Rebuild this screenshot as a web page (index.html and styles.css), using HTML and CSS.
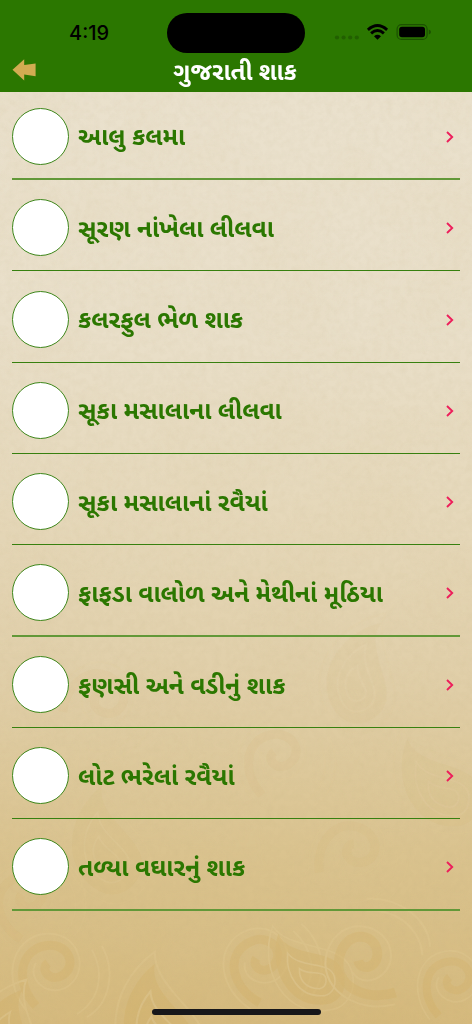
FILE: index.html
```html
<!DOCTYPE html>
<html lang="gu">
<head>
<meta charset="utf-8">
<title>ગુજરાતી શાક</title>
<link rel="stylesheet" href="styles.css">
</head>
<body>
<div class="screen">
  <svg class="paper" viewBox="0 0 472 1024" aria-hidden="true">
    <defs>
      <filter id="grain" x="0" y="0" width="100%" height="100%">
        <feTurbulence type="fractalNoise" baseFrequency="0.15" numOctaves="3" seed="4"/>
        <feColorMatrix values="0 0 0 0 .5  0 0 0 0 .4  0 0 0 0 .2  .5 .5 0 0 -.4"/>
      </filter>
      <filter id="mottle" x="0" y="0" width="100%" height="100%">
        <feTurbulence type="fractalNoise" baseFrequency="0.012" numOctaves="3" seed="9"/>
        <feColorMatrix values="0 0 0 0 .7  0 0 0 0 .56  0 0 0 0 .32  .8 .4 0 0 -.5"/>
      </filter>
      <g id="paisley">
        <path class="leaf" d="M0 60C-42 42-38-14-2-42C-8-8 48 10 34 42C27 59 12 64 0 60Z"/>
        <path class="vein" d="M0 68C-52 48-48-20-2-53C-3-14 60 8 42 48C33 68 13 74 0 68ZM1 49C-26 34-22 2-6-17C-5 8 31 18 23 38C18 49 9 52 1 49ZM1 39C-14 28-12 15-5 6C-2 19 18 23 14 33C11 40 5 41 1 39Z"/>
      </g>
      <g id="curl">
        <path class="swirl" d="M-18 40C-38 18-36-14-10-20C14-25 24-1 9 9C-3 17-15 4-6-3"/>
        <path class="vein" d="M-28 44C-52 14-43-27-11-32C26-37 38 8 11 22C-7 31-28 12-18-3M23 48C46 34 51 7 38-16M33 51C56 38 62 5 48-20"/>
      </g>
    </defs>
    <g class="pattern faint">
      <use href="#paisley" transform="translate(365 662) rotate(25)"/>
      <use href="#curl" transform="translate(280 755)"/>
      <use href="#curl" transform="translate(105 700) rotate(50)"/>
      <use href="#paisley" transform="translate(430 774) rotate(-30)"/>
      <use href="#paisley" transform="translate(104 830) scale(1.05)"/>
      <use href="#curl" transform="translate(28 896) rotate(-15)"/>
      <use href="#curl" transform="translate(357 850) rotate(35)"/>
    </g>
    <g class="pattern">
      <use href="#curl" transform="translate(54 966)"/>
      <use href="#paisley" transform="translate(157 1010) scale(1.1)"/>
      <use href="#curl" transform="translate(263 959) rotate(-20)"/>
      <use href="#paisley" transform="translate(300 962) rotate(-35) scale(.85)"/>
      <use href="#curl" transform="translate(364 956) rotate(-65) scale(1.1)"/>
      <use href="#curl" transform="translate(455 980) scale(.9)"/>
      <use href="#paisley" transform="translate(10 1030) rotate(20)"/>
    </g>
    <rect width="472" height="1024" filter="url(#mottle)" opacity=".22"/>
    <rect width="472" height="1024" filter="url(#grain)" opacity=".2"/>
  </svg>
  <header class="header">
    <div class="status">
      <span class="time">4:19</span>
      <span class="island"></span>
      <svg class="signals" viewBox="0 0 100 24">
        <g fill="#225f00"><circle cx="3" cy="17.5" r="2.1"/><circle cx="9.6" cy="17.5" r="2.1"/><circle cx="16.2" cy="17.5" r="2.1"/><circle cx="22.8" cy="17.5" r="2.1"/></g>
        <g fill="none" stroke="#000" stroke-width="2.9"><path d="M33.9 9.8Q43.5 1.4 53.1 9.8M37.1 13.4Q43.5 7.7 49.9 13.4"/></g>
        <path d="M40 16.2Q43.5 13.4 47 16.2L43.5 19.7Z"/>
        <rect x="63.1" y="4.6" width="30" height="14.8" rx="4.5" fill="none" stroke="#1c5100" stroke-width="1.2"/>
        <rect x="65.2" y="6.7" width="25.8" height="10.6" rx="2.8"/>
        <path d="M94.8 9.6Q97 10.2 97 12T94.8 14.4Z" fill="#1c5100"/>
      </svg>
    </div>
    <div class="titlebar">
      <svg class="back" viewBox="0 0 24 22"><path d="M.5 10.8L12.2.2V6.1L23.6 4.5V17.2L12.2 15.5V21.5Z" fill="#d2ac52"/></svg>
      <h1 class="title">ગુજરાતી શાક</h1>
    </div>
  </header>
  <ul class="list">
    <li class="row soft"><span class="thumb"></span><span class="name">આલુ કલમા</span><svg class="chevron" viewBox="0 0 8 12"><path d="M1 1L6.2 6L1 11"/></svg></li>
    <li class="row"><span class="thumb"></span><span class="name">સૂરણ નાંખેલા લીલવા</span><svg class="chevron" viewBox="0 0 8 12"><path d="M1 1L6.2 6L1 11"/></svg></li>
    <li class="row"><span class="thumb"></span><span class="name">કલરફુલ ભેળ શાક</span><svg class="chevron" viewBox="0 0 8 12"><path d="M1 1L6.2 6L1 11"/></svg></li>
    <li class="row"><span class="thumb"></span><span class="name">સૂકા મસાલાના લીલવા</span><svg class="chevron" viewBox="0 0 8 12"><path d="M1 1L6.2 6L1 11"/></svg></li>
    <li class="row"><span class="thumb"></span><span class="name">સૂકા મસાલાનાં રવૈયાં</span><svg class="chevron" viewBox="0 0 8 12"><path d="M1 1L6.2 6L1 11"/></svg></li>
    <li class="row soft"><span class="thumb"></span><span class="name">ફાફડા વાલોળ અને મેથીનાં મૂઠિયા</span><svg class="chevron" viewBox="0 0 8 12"><path d="M1 1L6.2 6L1 11"/></svg></li>
    <li class="row"><span class="thumb"></span><span class="name">ફણસી અને વડીનું શાક</span><svg class="chevron" viewBox="0 0 8 12"><path d="M1 1L6.2 6L1 11"/></svg></li>
    <li class="row"><span class="thumb"></span><span class="name">લોટ ભરેલાં રવૈયાં</span><svg class="chevron" viewBox="0 0 8 12"><path d="M1 1L6.2 6L1 11"/></svg></li>
    <li class="row soft"><span class="thumb"></span><span class="name">તળ્યા વઘારનું શાક</span><svg class="chevron" viewBox="0 0 8 12"><path d="M1 1L6.2 6L1 11"/></svg></li>
  </ul>
  <div class="home"></div>
</div>
</body>
</html>
```
FILE: styles.css
```css
* { box-sizing: border-box; }
body { margin: 0; font-family: "Noto Sans Gujarati", "Noto Sans", sans-serif; }
.screen {
  position: relative;
  display: flex;
  flex-direction: column;
  width: 472px;
  height: 1024px;
  overflow: hidden;
  background: linear-gradient(#eae1cd 90px, #e9dfc9 330px, #e5d7b8 540px, #e0cea7 690px, #dac38f 850px, #d5b97c 1024px);
}
.paper { position: absolute; inset: 0; width: 100%; height: 100%; }
.pattern { opacity: .26; }
.faint { opacity: .09; }
.leaf { fill: #cda34b; opacity: .65; }
.vein { fill: none; stroke: #e5ce98; stroke-width: 1.8; }
.swirl { fill: none; stroke: #cda34b; stroke-width: 9; opacity: .6; }
.header { position: relative; height: 91.6px; flex: none; background: #2b7700; }
.status { display: grid; grid-template-columns: 167px 138px 1fr; height: 53px; padding-top: 12.5px; }
.time { padding-left: 69px; font: 500 20px/40px Inter, sans-serif; color: #000; }
.island { height: 40.5px; border-radius: 21px; background: #000; }
.signals { width: 100px; height: 24px; margin: 7.5px 0 0 29px; }
.titlebar { display: grid; grid-template-columns: 60px 1fr 60px; height: 38px; }
.back { width: 24px; height: 22px; margin: 6px 0 0 12px; }
.title { margin: 0 2px 0 0; padding-top: 2px; text-align: center; font-size: 24.1px; font-weight: 700; line-height: 38px; color: #fff; }
.list { position: relative; margin: 0; padding: 0 12px; list-style: none; }
.row { display: flex; align-items: center; height: 91.36px; padding: 5.5px 6px 0 0; border-bottom: 1px solid #37800f; }
.row:first-child { height: 88.2px; padding-top: 3.5px; }
.soft { border-bottom: 2px solid #629838; }
.thumb { width: 57px; height: 57px; margin-right: 9px; border: 1px solid #3d861b; border-radius: 50%; background: #fff; flex: none; }
.name { flex: 1; padding-top: 6px; font-size: 24.6px; font-weight: 700; line-height: 34px; white-space: nowrap; color: #2b7700; }
.chevron { width: 8px; height: 12px; margin-top: 1px; fill: none; stroke: #ed1e5b; stroke-width: 1.9; }
.home { position: absolute; left: 151.5px; bottom: 9px; width: 169px; height: 6px; border-radius: 3px; background: #17171a; }
```
